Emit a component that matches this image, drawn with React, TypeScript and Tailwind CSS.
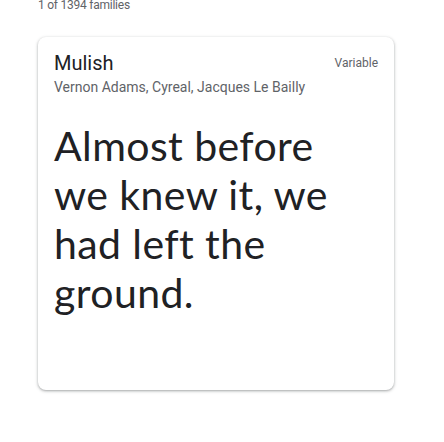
import React from "react";

export default function App() {
  return (
    <div className="w-[444px] h-[442px] bg-white overflow-hidden" style={{ fontFamily: "Roboto, 'Liberation Sans', sans-serif" }}>
      <div className="pl-[38px] -mt-[3px] text-[12px] leading-[16px] tracking-[-0.02em] text-[#5f6368]">1 of 1394 families</div>
      <div className="ml-[38px] mt-[24px] w-[356px] h-[353px] rounded-[8px] bg-white shadow-[0_1px_2px_0_rgba(60,64,67,0.3),0_1px_3px_1px_rgba(60,64,67,0.15)] px-[16px] pt-[12px]">
        <div className="flex items-start justify-between">
          <div className="text-[20px] leading-[28px] text-[#202124]">Mulish</div>
          <div className="text-[12px] leading-[20px] mt-[4px] text-[#5f6368]">Variable</div>
        </div>
        <div className="text-[14px] leading-[20px] text-[#5f6368]">Vernon Adams, Cyreal, Jacques Le Bailly</div>
        <div className="mt-[24px] w-[300px] text-[41px] leading-[49px] tracking-[0.01em] text-[#202124]" style={{ fontFamily: "Lato, 'Open Sans', sans-serif" }}>
          Almost before we knew it, we had left the ground.
        </div>
      </div>
    </div>
  );
}
